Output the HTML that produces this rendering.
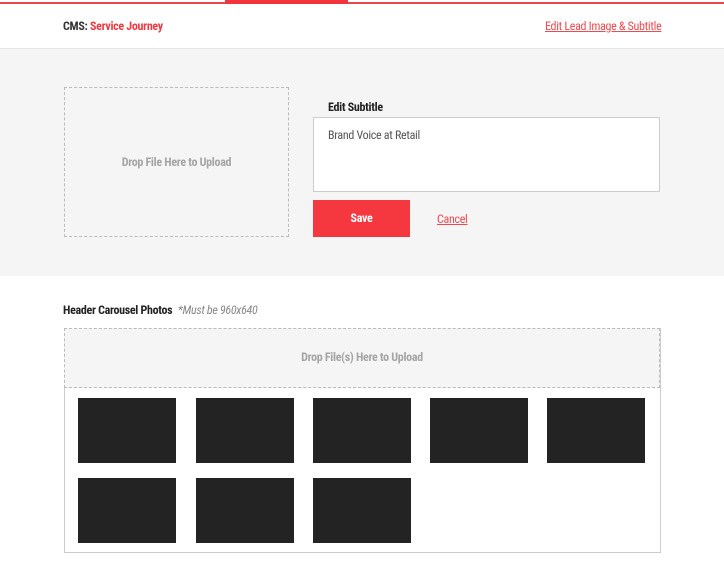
<!DOCTYPE html><html><head><style>
body{margin:0;width:724px;height:578px;background:#fff;font-family:"Roboto Condensed","Liberation Sans Narrow","Liberation Sans",sans-serif;position:relative;overflow:hidden}
.a{position:absolute}
.t{font-size:12px;letter-spacing:-0.3px}
.th{position:absolute;background:#232323;width:98px;height:65px}
</style></head><body>
<div class="a" style="left:0;top:2px;width:724px;height:2px;background:#e8474d"></div>
<div class="a" style="left:225px;top:0;width:123px;height:4px;background:#f2353d"></div>
<div class="a t" style="left:63px;top:19px;font-weight:bold;color:#333">CMS: <span style="color:#ee3b43">Service Journey</span></div>
<div class="a t" style="left:545px;top:19px;color:#ee4a50;text-decoration:underline">Edit Lead Image &amp; Subtitle</div>
<div class="a" style="left:0;top:48px;width:724px;height:227px;background:#f5f5f5;border-top:1px solid #e6e6e6"></div>
<div class="a" style="left:64px;top:87px;width:223px;height:148px;border:1px dashed #bbb"></div>
<div class="a t" style="left:64px;top:155px;width:225px;text-align:center;color:#a5a5a5;font-weight:bold">Drop File Here to Upload</div>
<div class="a t" style="left:328px;top:100px;font-weight:bold;color:#222">Edit Subtitle</div>
<div class="a" style="left:313px;top:117px;width:345px;height:73px;background:#fff;border:1px solid #ccc"></div>
<div class="a t" style="left:328px;top:128px;color:#555">Brand Voice at Retail</div>
<div class="a t" style="left:313px;top:200px;width:97px;height:37px;line-height:37px;background:#f5383f;color:#fff;font-weight:bold;text-align:center">Save</div>
<div class="a t" style="left:437px;top:212px;color:#ee4a50;text-decoration:underline">Cancel</div>
<div class="a t" style="left:63px;top:303px;font-weight:bold;color:#222">Header Carousel Photos <span style="font-weight:normal;font-style:italic;color:#888;margin-left:3px">*Must be 960x640</span></div>
<div class="a" style="left:64px;top:328px;width:595px;height:224px;border:1px solid #ccc;border-top:none"></div>
<div class="a" style="left:64px;top:328px;width:594px;height:58px;background:#f5f5f5;border:1px dashed #bbb"></div>
<div class="a t" style="left:64px;top:350px;width:596px;text-align:center;color:#a5a5a5;font-weight:bold">Drop File(s) Here to Upload</div>
<div class="th" style="left:78px;top:398px"></div><div class="th" style="left:196px;top:398px"></div><div class="th" style="left:313px;top:398px"></div><div class="th" style="left:430px;top:398px"></div><div class="th" style="left:547px;top:398px"></div>
<div class="th" style="left:78px;top:478px"></div><div class="th" style="left:196px;top:478px"></div><div class="th" style="left:313px;top:478px"></div>
</body></html>
